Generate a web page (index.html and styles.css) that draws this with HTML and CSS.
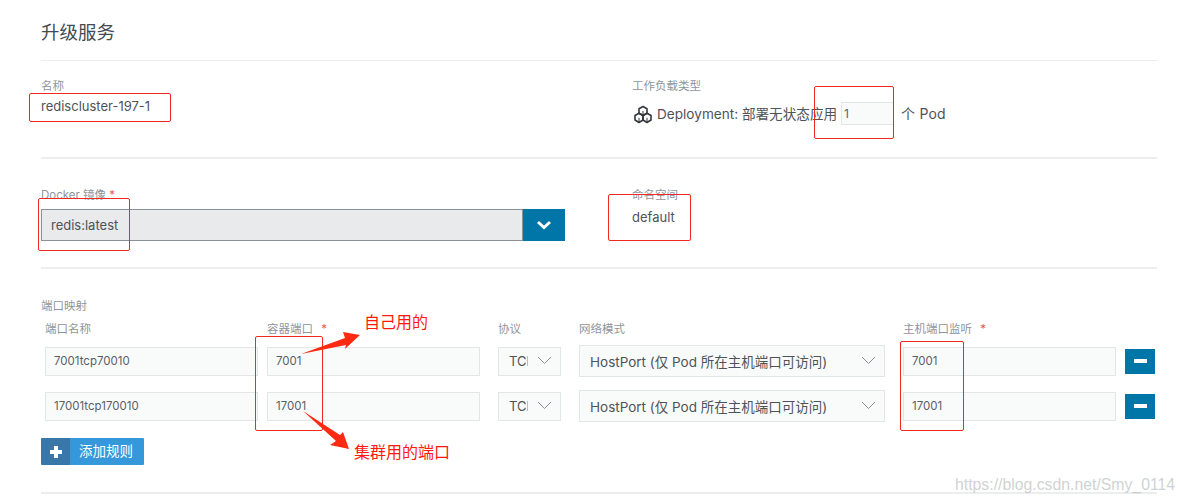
FILE: index.html
```html
<!DOCTYPE html>
<html lang="zh">
<head>
<meta charset="utf-8">
<title>升级服务</title>
<link rel="stylesheet" href="styles.css">
</head>
<body>
<main class="page">
  <header class="head"><h1>升级服务</h1></header>

  <section class="sec sec-info">
    <div class="col-left">
      <div class="label">名称</div>
      <div class="value">rediscluster-197-1</div>
    </div>
    <div class="col-right">
      <div class="label">工作负载类型</div>
      <div class="workload">
        <svg class="dep-icon" width="20" height="20" viewBox="0 0 20 20" fill="none" stroke="#33383e" stroke-width="1.6" stroke-linejoin="round">
          <path d="M10 1.500l4 2.300v4.400l-4 2.300-4-2.300V3.800z"/>
          <path d="M6 8.200l4 2.300v4.500l-4 2.500-4-2.500v-4.500z"/>
          <path d="M14 8.200l4 2.300v4.500l-4 2.500-4-2.500v-4.500z"/>
          <path d="M10 6v4.500M6 12.800v4.500M14 12.800v4.500" stroke-width="1"/>
        </svg>
        <span class="dep-text">Deployment: 部署无状态应用</span>
        <div class="field scale">1</div>
        <span class="pod">个 Pod</span>
      </div>
    </div>
  </section>

  <section class="sec sec-image">
    <div class="col-left">
      <div class="label">Docker 镜像 <span class="req">*</span></div>
      <div class="image-select">
        <div class="image-value">redis:latest</div>
        <div class="image-btn">
          <svg width="16" height="10" viewBox="0 0 16 10" fill="none" stroke="#fff" stroke-width="3"><path d="M2 2l6 5.500 6-5.500"/></svg>
        </div>
      </div>
    </div>
    <div class="col-right">
      <div class="label">命名空间</div>
      <div class="value ns">default</div>
    </div>
  </section>

  <section class="sec sec-ports">
    <div class="label">端口映射</div>
    <div class="ports">
      <div class="label">端口名称</div>
      <div class="label">容器端口 <span class="req req-gap">*</span></div>
      <div class="label">协议</div>
      <div class="label">网络模式</div>
      <div class="label">主机端口监听 <span class="req req-gap">*</span></div>
      <div></div>

      <div class="field">7001tcp70010</div>
      <div class="field">7001</div>
      <div class="field select"><span class="clip">TCP</span><svg class="chev" width="15" height="9" viewBox="0 0 15 9" fill="none" stroke="#8a9299" stroke-width="1"><path d="M1 1l6.500 6.500L14 1"/></svg></div>
      <div class="field select tall"><span class="net">HostPort (仅 Pod 所在主机端口可访问)</span><svg class="chev" width="15" height="9" viewBox="0 0 15 9" fill="none" stroke="#8a9299" stroke-width="1"><path d="M1 1l6.500 6.500L14 1"/></svg></div>
      <div class="field">7001</div>
      <div class="minus"><i></i></div>

      <div class="field">17001tcp170010</div>
      <div class="field">17001</div>
      <div class="field select"><span class="clip">TCP</span><svg class="chev" width="15" height="9" viewBox="0 0 15 9" fill="none" stroke="#8a9299" stroke-width="1"><path d="M1 1l6.500 6.500L14 1"/></svg></div>
      <div class="field select tall"><span class="net">HostPort (仅 Pod 所在主机端口可访问)</span><svg class="chev" width="15" height="9" viewBox="0 0 15 9" fill="none" stroke="#8a9299" stroke-width="1"><path d="M1 1l6.500 6.500L14 1"/></svg></div>
      <div class="field">17001</div>
      <div class="minus"><i></i></div>
    </div>
    <div class="add">
      <span class="add-icon"><svg width="14" height="14" viewBox="0 0 14 14" fill="#fff"><path d="M5 1h4v4h4v4H9v4H5V9H1V5h4z"/></svg></span>
      <span class="add-text">添加规则</span>
    </div>
  </section>
</main>

<div class="box box-name"></div>
<div class="box box-scale"></div>
<div class="box box-image"></div>
<div class="box box-ns"></div>
<div class="box box-cport"></div>
<div class="box box-hport"></div>
<svg class="arrows" width="1186" height="503" viewBox="0 0 1186 503" fill="#ff2a12">
  <polygon points="301,354 345,338 343,332 360,335 345,349 346,345"/>
  <polygon points="303,411 340,435 343,432 349,449 330,445 336,441"/>
</svg>
<div class="note note-a">自己用的</div>
<div class="note note-b">集群用的端口</div>
<div class="watermark">https://blog.csdn.net/Smy_0114</div>
</body>
</html>
```
FILE: styles.css
```css
* { box-sizing: border-box; }
html, body { margin: 0; padding: 0; background: #fff; }
body {
  width: 1186px;
  height: 503px;
  overflow: hidden;
  position: relative;
  font-family: "Inter", "Noto Sans CJK SC", sans-serif;
  color: #4d5359;
  font-size: 13px;
}
.page { padding: 0 29px 0 41px; }
.head { height: 61px; border-bottom: 1px solid #eceeee; }
h1 {
  margin: 0;
  padding-top: 20px;
  font-size: 18.5px;
  line-height: 24px;
  font-weight: 400;
  color: #444a52;
}
.sec { border-bottom: 2px solid #eceeee; }
.sec-info, .sec-image { display: grid; grid-template-columns: 591px 1fr; }
.sec-info { height: 98px; padding-top: 18px; }
.sec-image { height: 110px; padding-top: 29px; }
.sec-ports { height: 225px; padding-top: 30px; }
.label { font-size: 11.5px; line-height: 14px; color: #8f959b; white-space: nowrap; }
.value { margin-top: 3px; font-size: 13px; line-height: 20px; color: #4d5359; }
.ns { margin-top: 5px; }
.workload { display: flex; align-items: center; height: 24px; margin-top: 8px; margin-left: 1px; }
.dep-icon { flex: none; margin-top: 3px; }
.dep-text { margin-left: 4px; font-size: 13.6px; white-space: nowrap; }
.pod { margin-left: 7px; font-size: 14px; letter-spacing: 0.2px; white-space: nowrap; }
.field {
  display: flex;
  align-items: center;
  height: 29px;
  padding: 0 8px;
  background: #f9fbfa;
  border: 1px solid #e1e6e6;
  font-size: 11.5px;
  color: #5a6068;
  white-space: nowrap;
  overflow: hidden;
}
.scale { flex: none; width: 53px; height: 23px; margin-left: 4px; font-size: 12px; padding: 0 2px; }
.req { color: #f15a4a; }
.req-gap { margin-left: 5px; }
.image-select { display: flex; width: 524px; height: 32px; margin-top: 7px; }
.image-value {
  flex: 1;
  display: flex;
  align-items: center;
  padding-left: 9px;
  background: #e9eaec;
  border: 1px solid #8a9299;
  font-size: 13px;
  color: #4d5359;
}
.image-btn { width: 42px; background: #0075a8; display: flex; align-items: center; justify-content: center; }
.ports {
  display: grid;
  grid-template-columns: 222px 231px 81px 324px 222px 30px;
  row-gap: 13px;
  align-items: center;
  margin: 9px 0 0 4px;
}
.ports .label { margin-bottom: -4px; }
.ports > :nth-child(6n+1), .ports > :nth-child(6n+5) { margin-right: 9px; }
.ports > :nth-child(6n+2), .ports > :nth-child(6n+3), .ports > :nth-child(6n+4) { margin-right: 18px; }
.select { position: relative; padding: 0 10px; font-size: 13px; }
.tall { height: 32px; }
.clip { display: block; width: 19px; overflow: hidden; color: #4d5359; }
.net { color: #4d5359; font-size: 13.5px; }
.chev { position: absolute; right: 8px; top: 50%; margin-top: -5px; }
.minus { height: 25px; width: 30px; background: #0075a8; display: flex; align-items: center; justify-content: center; }
.minus i { display: block; width: 13px; height: 4px; background: #fff; }
.add { display: flex; width: 103px; height: 27px; margin-top: 16px; border-radius: 1px; overflow: hidden; }
.add-icon { width: 29px; background: #3a77a8; display: flex; align-items: center; justify-content: center; }
.add-text { flex: 1; background: #3498db; color: #fff; font-size: 13.5px; line-height: 27px; padding-left: 9px; }

.box { position: absolute; border: 1px solid #f02a1e; border-radius: 2px; }
.box-name { left: 29px; top: 93px; width: 142px; height: 29px; }
.box-scale { left: 814px; top: 86px; width: 80px; height: 53px; }
.box-image { left: 38px; top: 198px; width: 92px; height: 53px; }
.box-ns { left: 608px; top: 194px; width: 83px; height: 47px; }
.box-cport { left: 255px; top: 336px; width: 68px; height: 95px; }
.box-hport { left: 900px; top: 341px; width: 64px; height: 90px; }
.arrows { position: absolute; left: 0; top: 0; }
.note { position: absolute; font-size: 16px; line-height: 20px; color: #ff1a0a; white-space: nowrap; }
.note-a { left: 364px; top: 312px; }
.note-b { left: 354px; top: 442px; }
.watermark {
  position: absolute;
  left: 955px;
  top: 474px;
  font-family: "Liberation Sans", sans-serif;
  font-size: 15.8px;
  line-height: 22px;
  color: rgba(190, 196, 198, 0.75);
  white-space: nowrap;
}
```
